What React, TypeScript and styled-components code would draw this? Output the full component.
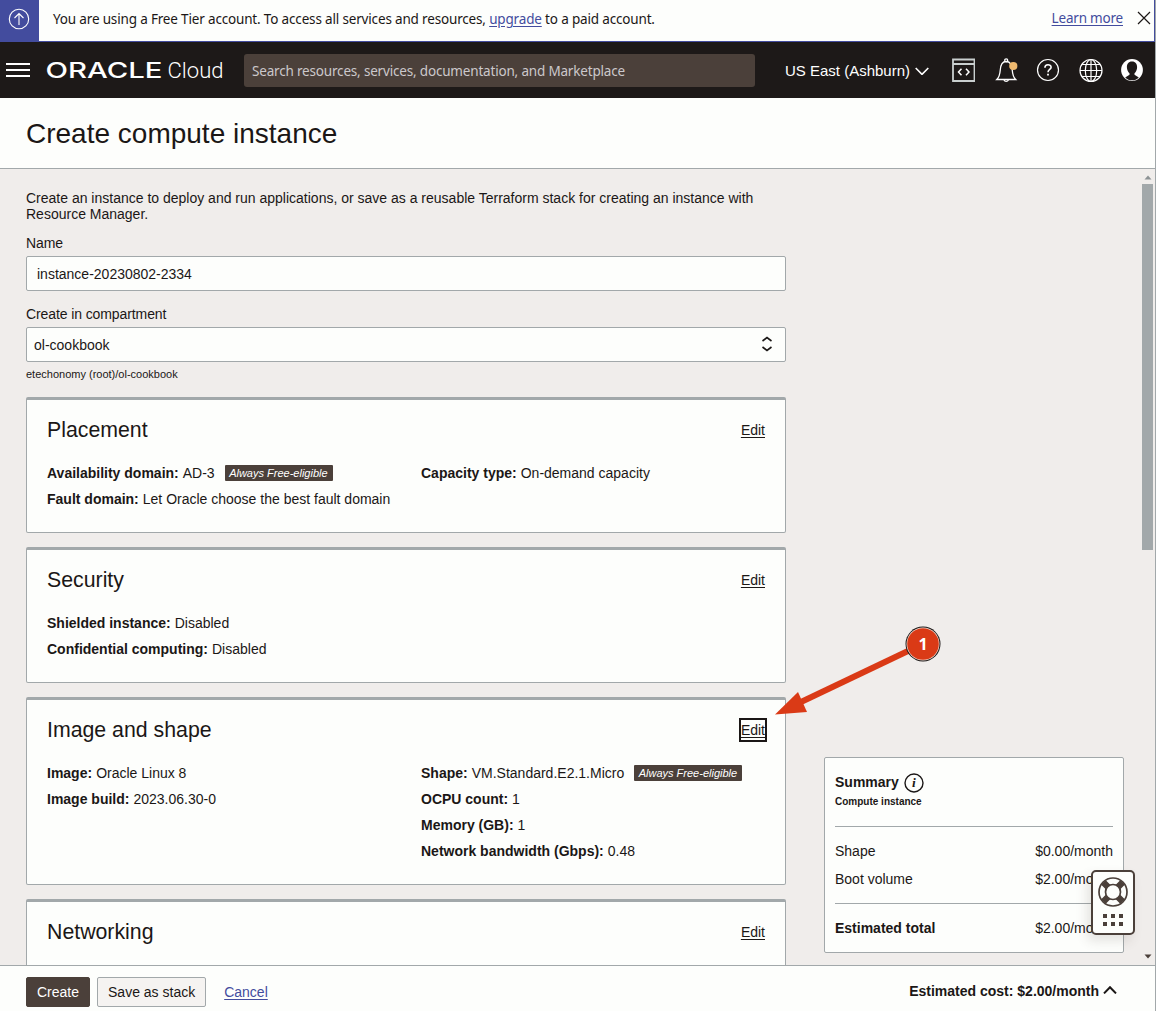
import React from "react";
import styled, { createGlobalStyle } from "styled-components";

const ink = "#1b1716";
const line = "#a2a8aa";
const blue = "#434c9e";
const paper = "#fdfefc";
const sand = "#f0edeb";
const umber = "#4b403a";

const Global = createGlobalStyle`
  * { box-sizing: border-box; }
  body { margin: 0; background: ${paper}; color: ${ink}; font: 14px/16px "Liberation Sans", Arial, sans-serif; }
  h1, h2, p, dl, dt, dd { margin: 0; font-weight: normal; }
  svg { display: block; flex: none; }
`;

const Page = styled.div`
  position: relative;
  display: flex;
  flex-direction: column;
  width: 1156px;
  height: 1011px;
  overflow: hidden;
  border-right: 1px solid ${line};
`;

const Banner = styled.div`
  display: flex;
  align-items: stretch;
  height: 42px;
  flex: none;
  border-bottom: 1px solid ${blue};
  border-right: 1px solid ${blue};
  font-family: "Noto Sans", "Open Sans", sans-serif;
`;

const BannerMark = styled.div`
  display: flex;
  width: 39px;
  padding: 8px 0 0 8px;
  background: ${blue};
`;

const BannerText = styled.p`
  flex: 1;
  padding: 9px 0 0 14px;
  font-size: 13.5px;
  line-height: 20px;
  letter-spacing: -0.165px;
  white-space: nowrap;
`;

const Link = styled.a`
  color: ${blue};
  text-decoration: underline;
  text-underline-offset: 2px;
`;

const BannerActions = styled.div`
  display: flex;
  gap: 14px;
  padding: 8px 3px 0 0;
  font-size: 13.5px;
  line-height: 20px;
  letter-spacing: -0.2px;
`;

const Header = styled.header`
  display: flex;
  align-items: center;
  height: 56px;
  flex: none;
  padding: 0 12px 0 6px;
  background: #1d1918;
  color: #fff;
`;

const Logo = styled.div`
  display: flex;
  margin-left: 16px;
`;

const Search = styled.div`
  display: flex;
  align-items: center;
  width: 511px;
  height: 33px;
  margin-left: 20px;
  padding: 2px 8px 0;
  border-radius: 3px;
  background: ${umber};
  color: #cbc8cb;
  font-family: "Noto Sans", "Open Sans", sans-serif;
  font-size: 13.5px;
  letter-spacing: -0.18px;
  white-space: nowrap;
`;

const Region = styled.div`
  display: flex;
  align-items: center;
  gap: 5px;
  margin-left: 30px;
  padding-top: 2px;
  font-size: 15px;
  white-space: nowrap;
`;

const HeaderIcons = styled.div`
  display: flex;
  flex: 1;
  justify-content: space-between;
  margin-left: 22px;
`;

const TitleBar = styled.div`
  display: flex;
  align-items: center;
  height: 71px;
  flex: none;
  padding: 2px 0 0 26px;
  border-bottom: 1px solid ${line};
`;

const Title = styled.h1`
  font-size: 28px;
  line-height: 32px;
`;

const Body = styled.div`
  display: flex;
  height: 796px;
  flex: none;
  overflow: hidden;
  background: ${sand};
`;

const Form = styled.main`
  display: flex;
  flex-direction: column;
  flex: none;
  width: 760px;
  margin-left: 26px;
  padding-top: 21px;
`;

const Label = styled.div<{ $top: number }>`
  margin-top: ${(p) => p.$top}px;
  letter-spacing: -0.1px;
`;

const Field = styled.div<{ $indent: number }>`
  display: flex;
  align-items: center;
  justify-content: space-between;
  flex: none;
  height: 35px;
  margin-top: 5px;
  padding: 0 12px 0 ${(p) => p.$indent}px;
  border: 1px solid ${line};
  border-radius: 2px;
  background: ${paper};
`;

const Hint = styled.div`
  margin: 5px 0 16px;
  font-size: 11px;
  line-height: 14px;
`;

const Card = styled.section<{ $height: number }>`
  flex: none;
  height: ${(p) => p.$height}px;
  margin-bottom: 14px;
  padding: 17px 20px 0;
  border: 1px solid ${line};
  border-top-width: 3px;
  border-radius: 2px;
  background: ${paper};
`;

const CardHead = styled.div`
  display: flex;
  align-items: center;
  justify-content: space-between;
  height: 26px;
`;

const CardTitle = styled.h2`
  font-size: 21.3px;
  line-height: 26px;
`;

const Edit = styled.a<{ $focused?: boolean }>`
  text-decoration: underline;
  text-underline-offset: 2px;
  line-height: 20px;
  outline: ${(p) => (p.$focused ? `2px solid ${ink}` : "none")};
`;

const Columns = styled.div`
  display: grid;
  grid-template-columns: 374px 1fr;
  margin-top: 17px;
`;

const Facts = styled.dl`
  display: flex;
  flex-direction: column;
`;

const Fact = styled.div`
  display: flex;
  align-items: center;
  height: 26px;
  gap: 4px;
  white-space: nowrap;
  dt { font-weight: bold; }
`;

const Pill = styled.span`
  height: 16px;
  margin-left: 6px;
  padding: 0 5px 0 4.5px;
  border-radius: 1px;
  background: ${umber};
  color: #fff;
  font-size: 11px;
  font-style: italic;
  line-height: 16px;
`;

const Summary = styled.aside`
  align-self: flex-end;
  width: 300px;
  height: 196px;
  margin: 0 0 12px 38px;
  padding: 15px 10px 0;
  border: 1px solid ${line};
  border-radius: 2px;
  background: ${paper};
`;

const SummaryHead = styled.div`
  display: flex;
  align-items: center;
  gap: 5px;
  height: 20px;
  font-weight: bold;
  span { padding-bottom: 2px; }
`;

const SummarySub = styled.div`
  padding: 1px 0 16px;
  border-bottom: 1px solid ${line};
  font-size: 10px;
  font-weight: bold;
`;

const CostRows = styled.div`
  padding: 10px 0;
  border-bottom: 1px solid ${line};
`;

const CostRow = styled.div<{ $total?: boolean }>`
  display: flex;
  align-items: center;
  justify-content: space-between;
  height: 28px;
  margin-top: ${(p) => (p.$total ? 10 : 0)}px;
  span:first-child { font-weight: ${(p) => (p.$total ? "bold" : "normal")}; }
`;

const ScrollBar = styled.div`
  display: flex;
  flex-direction: column;
  align-items: center;
  justify-content: space-between;
  width: 11px;
  margin: 6px 2px 6px auto;
`;

const ScrollThumb = styled.div`
  width: 11px;
  height: 366px;
  margin: 4px 0 auto;
  background: ${line};
`;

const Footer = styled.footer`
  display: flex;
  align-items: flex-start;
  height: 46px;
  flex: none;
  padding: 11px 38px 0 26px;
  border-top: 1px solid ${line};
`;

const Button = styled.button<{ $primary?: boolean }>`
  height: 30px;
  margin-right: 7px;
  padding: 0 10px;
  border: 1px solid ${(p) => (p.$primary ? umber : line)};
  border-radius: 2px;
  background: ${(p) => (p.$primary ? umber : "#f5f3f1")};
  color: ${(p) => (p.$primary ? "#fff" : ink)};
  font: inherit;
`;

const Cancel = styled(Link)`
  margin-left: 11px;
  line-height: 30px;
`;

const Cost = styled.div`
  display: flex;
  align-items: center;
  gap: 4px;
  height: 28px;
  margin-left: auto;
  font-weight: bold;
  svg { margin-bottom: 2px; }
`;

const HelpWidget = styled.div`
  position: absolute;
  left: 1091px;
  top: 870px;
  display: flex;
  flex-direction: column;
  align-items: center;
  gap: 7px;
  width: 44px;
  height: 65px;
  padding-top: 5px;
  border: 2px solid ${umber};
  border-radius: 5px;
  background: ${paper};
  box-shadow: -4px 6px 12px rgba(75, 64, 58, 0.14);
`;

const Callout = styled.svg`
  position: absolute;
  left: 770px;
  top: 620px;
`;

const UpIcon = () => (
  <svg width="22" height="22" viewBox="0 0 22 22" fill="none" stroke="#fff" strokeWidth="1.1">
    <circle cx="11" cy="11" r="9.7" />
    <path d="M11 17V5.5M6.5 10 11 5.5l4.5 4.5" />
  </svg>
);

const CloseIcon = () => (
  <svg width="14" height="20" viewBox="0 0 14 20" stroke={ink} strokeWidth="1.2">
    <path d="M1 4l12 12M13 4 1 16" />
  </svg>
);

const MenuIcon = () => (
  <svg width="24" height="14" viewBox="0 0 24 14" fill="#fff">
    <path d="M0 0h24v2H0zM0 6h24v2H0zM0 12h24v2H0z" />
  </svg>
);

const Wordmark = () => (
  <svg width="178" height="26" viewBox="0 0 178 26" fill="#fff">
    <text x="-0.500" y="20.800" fontFamily="Inter, sans-serif" fontWeight="500" fontSize="21" textLength="117" lengthAdjust="spacingAndGlyphs">ORACLE</text>
    <text x="121.500" y="20.800" fontFamily="Roboto, sans-serif" fontWeight="300" fontSize="22" textLength="56" lengthAdjust="spacingAndGlyphs">Cloud</text>
  </svg>
);

const ConsoleIcon = () => (
  <svg width="24" height="26" viewBox="0 0 24 26" fill="none" stroke="#c9cfcf" strokeWidth="1.8">
    <path d="M2 2.500h21.500v21.500H2zM2 7h21.500" />
    <path d="M10.500 11.700 7.500 15l3 3.300M15 11.700l3 3.300-3 3.300" stroke="#fff" strokeWidth="1.500" />
  </svg>
);

const BellIcon = () => (
  <svg width="24" height="26" viewBox="0 0 24 26" fill="none" stroke="#fff" strokeWidth="1.3">
    <path d="M2.800 22.500h18.900c-2.600-2.500-3.100-5-3.400-9C18 7.500 16 4.500 12.200 4.500S6.500 7.500 6.200 13.500c-.300 4-.800 6.500-3.400 9z" />
    <circle cx="12.200" cy="3.300" r="1.500" />
    <path d="M10 22.700a2.300 2.300 0 0 0 4.400 0" />
    <circle cx="19.300" cy="9" r="4.100" fill="#efb96f" stroke="none" />
  </svg>
);

const HelpIcon = () => (
  <svg width="24" height="26" viewBox="0 0 24 26" fill="none" stroke="#fff" strokeWidth="1.2">
    <circle cx="12" cy="13" r="10.500" />
    <path d="M8.900 10.700c0-4 6.200-3.800 6.200-.500 0 2.200-3.100 2.300-3.100 5" strokeWidth="1.600" />
    <path d="M12 16.800v1.800" strokeWidth="1.800" />
  </svg>
);

const GlobeIcon = () => (
  <svg width="24" height="26" viewBox="0 0 24 26" fill="none" stroke="#fff" strokeWidth="1.200">
    <circle cx="12" cy="13.500" r="11" />
    <ellipse cx="12" cy="13.500" rx="5.700" ry="11" />
    <path d="M12 2.500v22M1 13.500h22M3 7.500h18M3 19.500h18" />
  </svg>
);

const UserIcon = () => (
  <svg width="22" height="26" viewBox="0 0 22 26">
    <circle cx="11" cy="13" r="10.900" fill="#fff" />
    <path d="M11 4.600c-3.600 0-5.100 2.600-5.100 5.600 0 2.500 1.200 4.900 2.600 6v1.600l-4.300 2.600c3.700 3.900 9.900 3.900 13.600 0l-4.300-2.600v-1.600c1.400-1.100 2.600-3.500 2.600-6 0-3-1.500-5.600-5.100-5.600z" fill="#1d1918" />
  </svg>
);

const Chevron = ({ up, size = 14, stroke = 1.6 }: { up?: boolean; size?: number; stroke?: number }) => (
  <svg width={size} height={size * 0.6} viewBox="0 0 14 8.4" fill="none" stroke="currentColor" strokeWidth={stroke}>
    <path d={up ? "M1 7.4 7 1.200l6 6.200" : "M.7 1l6.300 6.400L13.300 1"} />
  </svg>
);

const SelectArrows = () => (
  <svg width="12" height="20" viewBox="0 0 12 20" fill="none" stroke={ink} strokeWidth="1.600">
    <path d="M1.500 6 6 2.500 10.500 6M1.500 12 6 15.500l4.500-3.500" />
  </svg>
);

const InfoIcon = () => (
  <svg width="20" height="20" viewBox="0 0 20 20">
    <circle cx="10" cy="10" r="9" fill="none" stroke={ink} strokeWidth="1.400" />
    <text x="10" y="14.300" textAnchor="middle" fontFamily="Liberation Serif, serif" fontStyle="italic" fontWeight="bold" fontSize="13.500" fill={ink}>i</text>
  </svg>
);

const LifeRing = () => (
  <svg width="30" height="30" viewBox="0 0 30 30" fill="none" stroke={umber}>
    <g strokeWidth="6.500">
      <path d="M5.500 5.500l5 5M24.500 5.500l-5 5M5.500 24.500l5-5M24.500 24.500l-5-5" />
    </g>
    <circle cx="15" cy="15" r="14" strokeWidth="1.700" />
    <circle cx="15" cy="15" r="7.500" strokeWidth="1.700" fill={paper} />
  </svg>
);

const GripDots = () => (
  <svg width="20" height="12" viewBox="0 0 20 12" fill={umber}>
    <path d="M0 0h4v4H0zM8 0h4v4H8zM16 0h4v4h-4zM0 8h4v4H0zM8 8h4v4H8zM16 8h4v4h-4z" />
  </svg>
);

const ScrollArrow = ({ down }: { down?: boolean }) => (
  <svg width="8" height="5" viewBox="0 0 8 5" fill={down ? umber : "#8c9294"}>
    <path d={down ? "M.5.5h7L4 4.500z" : "M.5 4.500h7L4 .5z"} />
  </svg>
);

type Item = { label: string; value: string; free?: boolean };
type Section = { title: string; height: number; focused?: boolean; left: Item[]; right: Item[] };

const sections: Section[] = [
  {
    title: "Placement",
    height: 136,
    left: [
      { label: "Availability domain:", value: "AD-3", free: true },
      { label: "Fault domain:", value: "Let Oracle choose the best fault domain" },
    ],
    right: [{ label: "Capacity type:", value: "On-demand capacity" }],
  },
  {
    title: "Security",
    height: 136,
    left: [
      { label: "Shielded instance:", value: "Disabled" },
      { label: "Confidential computing:", value: "Disabled" },
    ],
    right: [],
  },
  {
    title: "Image and shape",
    height: 188,
    focused: true,
    left: [
      { label: "Image:", value: "Oracle Linux 8" },
      { label: "Image build:", value: "2023.06.30-0" },
    ],
    right: [
      { label: "Shape:", value: "VM.Standard.E2.1.Micro", free: true },
      { label: "OCPU count:", value: "1" },
      { label: "Memory (GB):", value: "1" },
      { label: "Network bandwidth (Gbps):", value: "0.48" },
    ],
  },
  { title: "Networking", height: 136, left: [], right: [] },
];

const FactList = ({ items }: { items: Item[] }) => (
  <Facts>
    {items.map((it) => (
      <Fact key={it.label}>
        <dt>{it.label}</dt>
        <dd>{it.value}</dd>
        {it.free && <Pill>Always Free-eligible</Pill>}
      </Fact>
    ))}
  </Facts>
);

export default function App() {
  return (
    <Page>
      <Global />
      <Banner>
        <BannerMark><UpIcon /></BannerMark>
        <BannerText>
          You are using a Free Tier account. To access all services and resources, <Link>upgrade</Link> to a paid account.
        </BannerText>
        <BannerActions>
          <Link>Learn more</Link>
          <CloseIcon />
        </BannerActions>
      </Banner>
      <Header>
        <MenuIcon />
        <Logo><Wordmark /></Logo>
        <Search>Search resources, services, documentation, and Marketplace</Search>
        <Region>US East (Ashburn) <Chevron /></Region>
        <HeaderIcons>
          <ConsoleIcon />
          <BellIcon />
          <HelpIcon />
          <GlobeIcon />
          <UserIcon />
        </HeaderIcons>
      </Header>
      <TitleBar><Title>Create compute instance</Title></TitleBar>
      <Body>
        <Form>
          <p>Create an instance to deploy and run applications, or save as a reusable Terraform stack for creating an instance with Resource Manager.</p>
          <Label $top={13}>Name</Label>
          <Field $indent={10}>instance-20230802-2334</Field>
          <Label $top={15}>Create in compartment</Label>
          <Field $indent={7}>ol-cookbook <SelectArrows /></Field>
          <Hint>etechonomy (root)/ol-cookbook</Hint>
          {sections.map((s) => (
            <Card key={s.title} $height={s.height}>
              <CardHead>
                <CardTitle>{s.title}</CardTitle>
                <Edit $focused={s.focused}>Edit</Edit>
              </CardHead>
              <Columns>
                <FactList items={s.left} />
                <FactList items={s.right} />
              </Columns>
            </Card>
          ))}
        </Form>
        <Summary>
          <SummaryHead><span>Summary</span> <InfoIcon /></SummaryHead>
          <SummarySub>Compute instance</SummarySub>
          <CostRows>
            <CostRow><span>Shape</span><span>$0.00/month</span></CostRow>
            <CostRow><span>Boot volume</span><span>$2.00/month</span></CostRow>
          </CostRows>
          <CostRow $total><span>Estimated total</span><span>$2.00/month</span></CostRow>
        </Summary>
        <ScrollBar>
          <ScrollArrow />
          <ScrollThumb />
          <ScrollArrow down />
        </ScrollBar>
      </Body>
      <Footer>
        <Button $primary>Create</Button>
        <Button>Save as stack</Button>
        <Cancel>Cancel</Cancel>
        <Cost>Estimated cost: $2.00/month <Chevron up stroke={2} /></Cost>
      </Footer>
      <HelpWidget>
        <LifeRing />
        <GripDots />
      </HelpWidget>
      <Callout width="175" height="100" viewBox="0 0 175 100">
        <path d="M138 31 31 82" stroke="#da3a16" strokeWidth="6" />
        <path d="M5 94.500 28 72l9 20z" fill="#da3a16" />
        <circle cx="153" cy="24" r="17.500" fill={ink} />
        <circle cx="153" cy="24" r="16.500" fill="#f6e3da" />
        <circle cx="153" cy="24" r="15.800" fill="#da3a16" />
        <text x="153" y="30" textAnchor="middle" fontFamily="Open Sans, sans-serif" fontWeight="bold" fontSize="16" fill="#fff">1</text>
      </Callout>
    </Page>
  );
}
